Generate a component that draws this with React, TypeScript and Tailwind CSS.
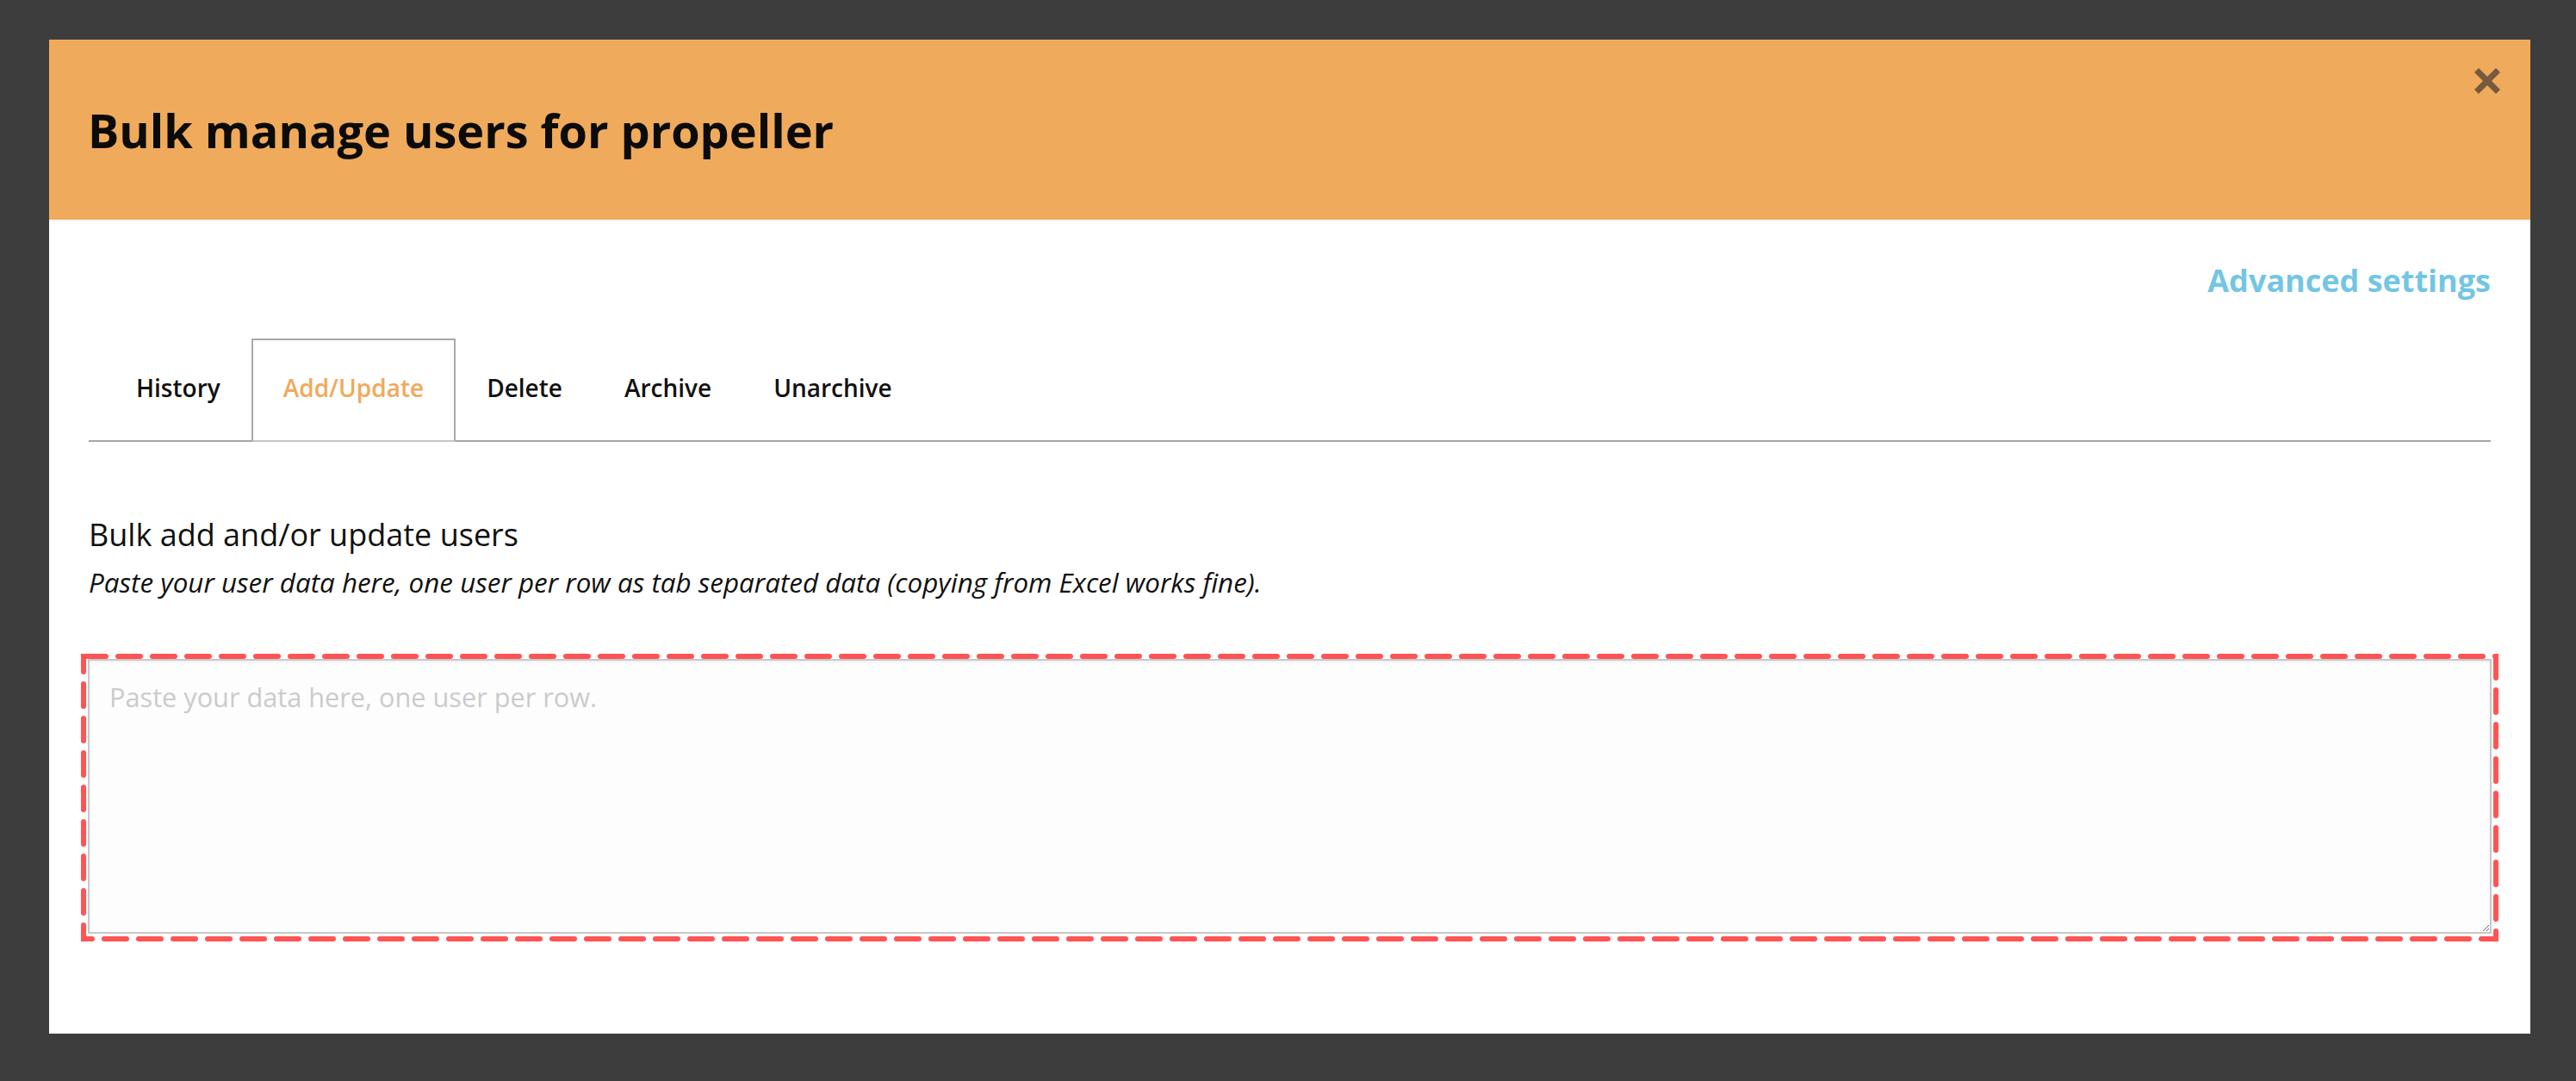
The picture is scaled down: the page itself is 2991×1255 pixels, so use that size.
import React from 'react';

const tabs = ['History', 'Add/Update', 'Delete', 'Archive', 'Unarchive'];

const App: React.FC = () => {
  const active = 'Add/Update';

  return (
    <div className="min-h-screen bg-[#3d3d3d] pl-[57px] pr-[53px] pt-[46px] pb-[55px] font-['Open_Sans',sans-serif]">
      <div className="w-[2881px] h-[1154px] bg-white flex flex-col">
        {/* Header */}
        <header className="relative h-[209px] bg-[#f0aa5c] flex items-center pl-[45px]">
          <h1 className="text-[54px] leading-none font-bold text-[#0b0c0a]">Bulk manage users for propeller</h1>
          <button className="absolute top-[33px] right-[35px] w-[30px] h-[30px]" aria-label="Close">
            <svg width="30" height="30" viewBox="0 0 30 30">
              <line x1="2.5" y1="2.5" x2="27.5" y2="27.5" stroke="#765a3c" strokeWidth="7" />
              <line x1="27.5" y1="2.5" x2="2.5" y2="27.5" stroke="#765a3c" strokeWidth="7" />
            </svg>
          </button>
        </header>

        {/* Body */}
        <div className="flex flex-col px-[46px] pt-[53px]">
          <div className="flex justify-end">
            <a href="#" className="text-[36px] leading-none font-bold text-[#73c6e3]">Advanced settings</a>
          </div>

          {/* Tabs */}
          <ul className="mt-[49px] flex items-end pl-[19px] border-b-2 border-[#a6a6a6]">
            {tabs.map((tab) =>
              tab === active ? (
                <li
                  key={tab}
                  className="-mb-[2px] h-[120px] px-[35px] flex items-center pb-[6px] bg-white border-2 border-[#a8a8a8] border-b-[#c6c6c6] text-[28px] leading-none font-semibold text-[#f0a95b]"
                >
                  {tab}
                </li>
              ) : (
                <li
                  key={tab}
                  className="h-[118px] px-[36px] flex items-center pb-[4px] text-[28px] leading-none font-semibold text-[#111]"
                >
                  {tab}
                </li>
              )
            )}
          </ul>

          {/* Content */}
          <h2 className="mt-[90px] text-[36px] leading-none font-normal text-[#111]">Bulk add and/or update users</h2>
          <p className="mt-[21px] text-[31.4px] leading-none italic text-[#111]">
            Paste your user data here, one user per row as tab separated data (copying from Excel works fine).
          </p>

          <div className="relative mt-[74px] -ml-[1px]">
            <textarea
              className="block w-[2791px] h-[319px] px-[23px] pt-[27px] text-[30.7px] leading-none bg-[#fdfdfd] border-2 border-[#c8c8c8] shadow-[inset_0_2px_3px_rgba(0,0,0,0.06)] placeholder:text-[#cbcbcb] outline-none"
              placeholder="Paste your data here, one user per row."
            />
            {/* highlight overlay */}
            <svg className="absolute -left-[8px] -top-[6px] pointer-events-none" width="2807" height="334">
              <rect
                x="3"
                y="3"
                width="2801"
                height="328"
                fill="none"
                stroke="#ff5454"
                strokeWidth="6"
                strokeDasharray="26 14"
                strokeLinecap="round"
              />
            </svg>
          </div>
        </div>
      </div>
    </div>
  );
};

export default App;
